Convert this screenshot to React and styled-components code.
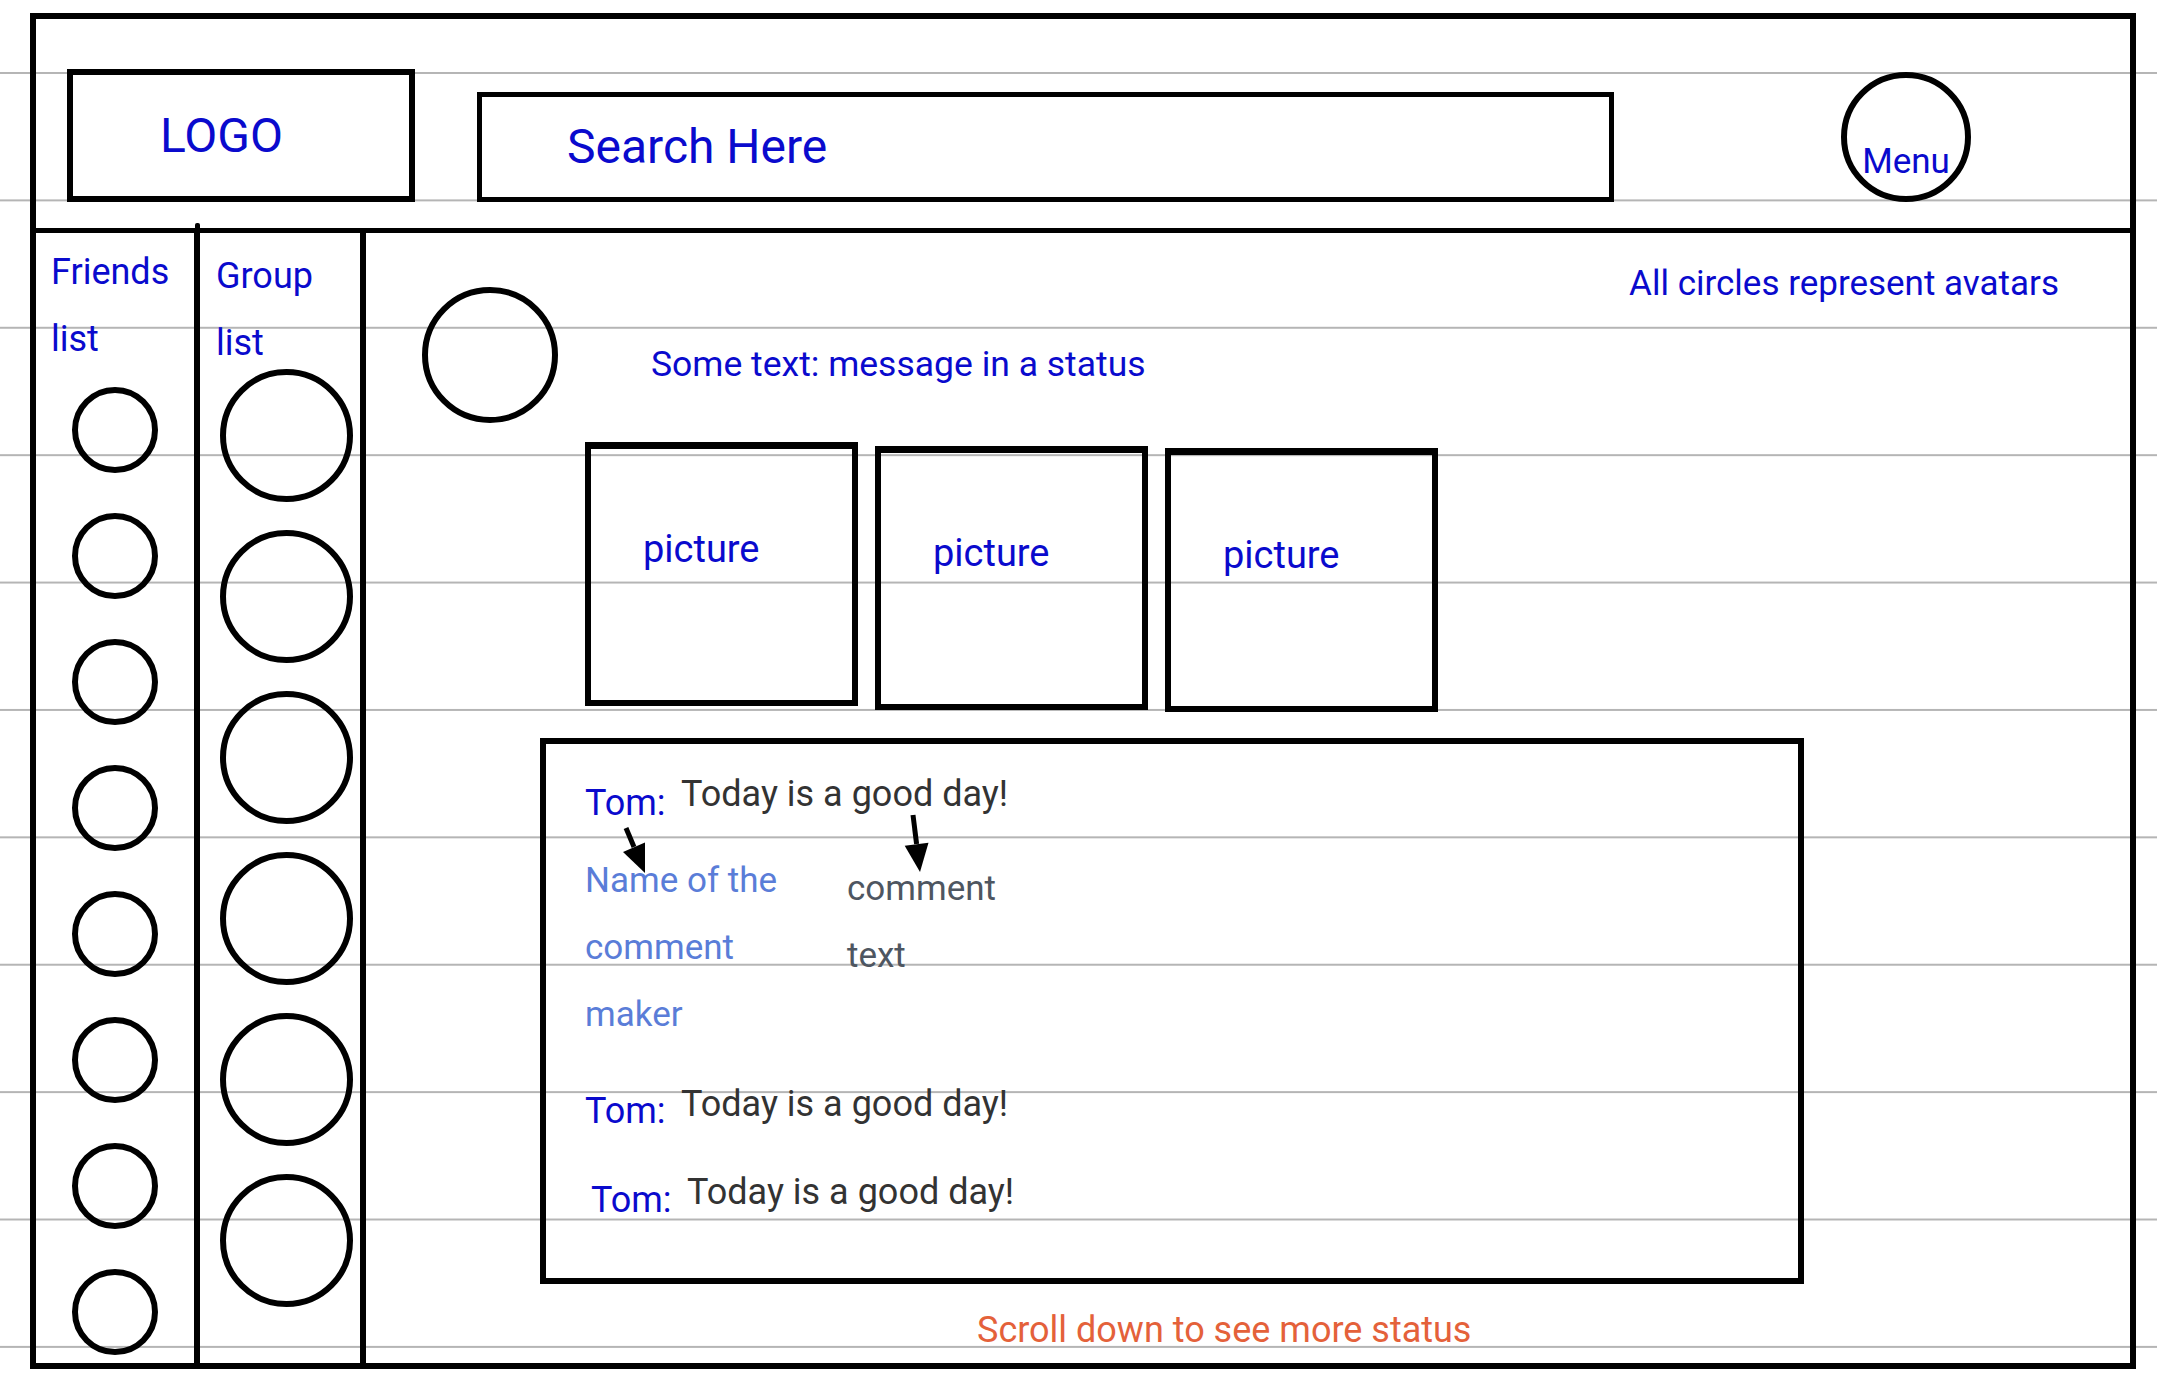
import React from 'react'
import styled, { createGlobalStyle } from 'styled-components'

const colors = {
  ink: '#000',
  blue: '#0a0acd',
  softBlue: '#5a7dd8',
  slate: '#4e5661',
  text: '#333',
  orange: '#e4613a',
  rule: '#b5b5b5',
}

const GlobalStyle = createGlobalStyle`
  html, body {
    margin: 0;
    padding: 0;
  }
  body {
    min-height: 1386px;
    background-color: #fff;
    background-image: linear-gradient(${colors.rule} 0 2px, transparent 2px);
    background-size: 100% 127.4px;
    background-position: 0 72px;
    font-family: Roboto, 'Liberation Sans', sans-serif;
    overflow: hidden;
  }
`

const friends = [0, 1, 2, 3, 4, 5, 6, 7]
const groups = [0, 1, 2, 3, 4, 5]

const App = () => {
  return (
    <>
      <GlobalStyle />
      <Frame>
        <Header>
          <LogoBox>LOGO</LogoBox>
          <SearchBox>Search Here</SearchBox>
          <MenuButton>Menu</MenuButton>
        </Header>
        <Body>
          <ListColumn $width={164} $top={6} $overshoot>
            <ListLabel $indent={15}>Friends<br />list</ListLabel>
            <AvatarStack $gap={40} $top={14} $center>
              {friends.map(i => <Avatar key={i} $size={86} />)}
            </AvatarStack>
          </ListColumn>
          <ListColumn $width={166} $top={10}>
            <ListLabel $indent={16}>Group<br />list</ListLabel>
            <AvatarStack $gap={28} $top={-8} $indent={20}>
              {groups.map(i => <Avatar key={i} $size={133} />)}
            </AvatarStack>
          </ListColumn>
          <Main>
            <TopRow>
              <StatusAvatar $size={136} />
              <Message>Some text: message in a status</Message>
              <Note>All circles represent avatars</Note>
            </TopRow>
            <Pictures>
              <PicBox $dy={0}>picture</PicBox>
              <PicBox $dy={4}>picture</PicBox>
              <PicBox $dy={6}>picture</PicBox>
            </Pictures>
            <CommentBox>
              <CommentRow>
                <Author>Tom:</Author>
                <CommentText>Today is a good day!</CommentText>
              </CommentRow>
              <Annotation>
                <MakerNote>Name of the<br />comment<br />maker</MakerNote>
                <TextNote>comment<br />text</TextNote>
              </Annotation>
              <CommentRow $gap={38}>
                <Author $drop={7}>Tom:</Author>
                <CommentText>Today is a good day!</CommentText>
              </CommentRow>
              <CommentRow $gap={45} $indent={6}>
                <Author $drop={8}>Tom:</Author>
                <CommentText>Today is a good day!</CommentText>
              </CommentRow>
              <Arrows viewBox="0 0 1252 534">
                <line x1="80" y1="84" x2="88" y2="103" />
                <polygon points="77,108 99,98.5 99,129" />
                <line x1="367" y1="71" x2="370.6" y2="100" />
                <polygon points="358.7,101.7 382.5,98.7 374,128" />
              </Arrows>
            </CommentBox>
            <ScrollHint>Scroll down to see more status</ScrollHint>
          </Main>
        </Body>
      </Frame>
    </>
  )
}

export default App

const Frame = styled.div`
  box-sizing: border-box;
  width: 2106px;
  height: 1356px;
  margin: 13px 0 0 30px;
  border: 6px solid ${colors.ink};
  display: flex;
  flex-direction: column;
`

const Header = styled.header`
  box-sizing: border-box;
  height: 214px;
  flex-shrink: 0;
  border-bottom: 5px solid ${colors.ink};
  display: flex;
  align-items: flex-end;
  padding: 0 0 26px 31px;
  color: ${colors.blue};
`

const LogoBox = styled.div`
  box-sizing: border-box;
  width: 348px;
  height: 133px;
  border: 6px solid ${colors.ink};
  display: flex;
  align-items: center;
  padding-left: 87px;
  font-size: 48px;
  line-height: 1;
`

const SearchBox = styled.div`
  box-sizing: border-box;
  width: 1137px;
  height: 110px;
  margin-left: 62px;
  border: 5px solid ${colors.ink};
  display: flex;
  align-items: center;
  padding-left: 85px;
  font-size: 48px;
  line-height: 1;
`

const MenuButton = styled.div`
  box-sizing: border-box;
  width: 130px;
  height: 130px;
  margin-left: 227px;
  border: 6px solid ${colors.ink};
  border-radius: 50%;
  display: flex;
  align-items: center;
  justify-content: center;
  padding-top: 49px;
  font-size: 35px;
  line-height: 1;
`

const Body = styled.div`
  flex: 1;
  min-height: 0;
  display: flex;
`

const ListColumn = styled.aside`
  position: relative;
  box-sizing: border-box;
  width: ${p => p.$width}px;
  flex-shrink: 0;
  border-right: 6px solid ${colors.ink};
  padding-top: ${p => p.$top}px;
  display: flex;
  flex-direction: column;
  &::after {
    content: '';
    display: ${p => (p.$overshoot ? 'block' : 'none')};
    position: absolute;
    right: -6px;
    top: -10px;
    width: 5px;
    height: 10px;
    background: ${colors.ink};
    border-radius: 2px 2px 0 0;
  }
`

const ListLabel = styled.div`
  padding-left: ${p => p.$indent}px;
  font-size: 36px;
  line-height: 67px;
  color: ${colors.blue};
`

const AvatarStack = styled.div`
  display: flex;
  flex-direction: column;
  align-items: ${p => (p.$center ? 'center' : 'flex-start')};
  gap: ${p => p.$gap}px;
  margin-top: ${p => p.$top}px;
  padding-left: ${p => p.$indent || 0}px;
`

const Avatar = styled.div`
  box-sizing: border-box;
  width: ${p => p.$size}px;
  height: ${p => p.$size}px;
  flex-shrink: 0;
  border: 6px solid ${colors.ink};
  border-radius: 50%;
`

const Main = styled.main`
  flex: 1;
  min-width: 0;
  display: flex;
  flex-direction: column;
  padding: 30px 71px 0 56px;
`

const TopRow = styled.div`
  display: flex;
  align-items: flex-start;
  color: ${colors.blue};
`

const StatusAvatar = styled(Avatar)`
  margin-top: 24px;
`

const Message = styled.p`
  margin: 80px 0 0 93px;
  font-size: 35.5px;
  line-height: 42px;
`

const Note = styled.p`
  margin: 0 0 0 auto;
  font-size: 35px;
  line-height: 41px;
`

const Pictures = styled.div`
  display: flex;
  align-items: flex-start;
  gap: 17px;
  margin: 19px 0 0 163px;
`

const PicBox = styled.div`
  box-sizing: border-box;
  width: 273px;
  height: 264px;
  margin-top: ${p => p.$dy}px;
  border: 6px solid ${colors.ink};
  border-top-width: 7px;
  padding: 81px 0 0 52px;
  font-size: 38px;
  line-height: 1;
  color: ${colors.blue};
`

const CommentBox = styled.section`
  position: relative;
  box-sizing: border-box;
  width: 1264px;
  height: 546px;
  margin: 26px 0 0 118px;
  border: 6px solid ${colors.ink};
  padding: 32px 0 0 39px;
`

const CommentRow = styled.div`
  display: flex;
  align-items: flex-start;
  margin-top: ${p => p.$gap || 0}px;
  padding-left: ${p => p.$indent || 0}px;
  font-size: 36px;
  line-height: 1;
`

const Author = styled.span`
  width: 96px;
  flex-shrink: 0;
  margin-top: ${p => p.$drop ?? 9}px;
  color: ${colors.blue};
`

const CommentText = styled.span`
  color: ${colors.text};
`

const Annotation = styled.div`
  display: flex;
  align-items: flex-start;
  margin-top: 26px;
  font-size: 35px;
  line-height: 67px;
`

const MakerNote = styled.div`
  width: 262px;
  color: ${colors.softBlue};
`

const TextNote = styled.div`
  margin-top: 8px;
  color: ${colors.slate};
`

const Arrows = styled.svg`
  position: absolute;
  inset: 0;
  width: 100%;
  height: 100%;
  pointer-events: none;
  overflow: visible;
  & line {
    stroke: ${colors.ink};
    stroke-width: 5;
  }
  & polygon {
    fill: ${colors.ink};
  }
`

const ScrollHint = styled.p`
  margin: 28px 0 0 555px;
  font-size: 36px;
  line-height: 1;
  color: ${colors.orange};
`
